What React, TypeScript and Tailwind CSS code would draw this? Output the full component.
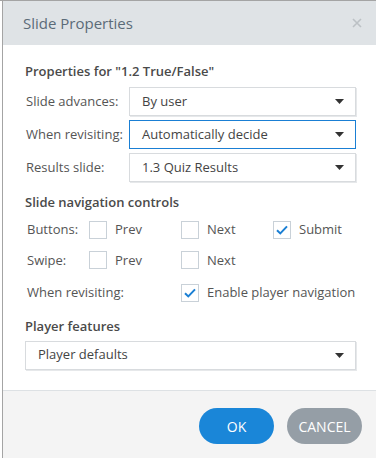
import React from "react"

const font = { fontFamily: '"Segoe UI", "Open Sans", sans-serif' }

function Caret() {
  return (
    <svg width="9" height="5" viewBox="0 0 9 5" className="shrink-0">
      <path d="M0 0h9L4.5 5z" fill="#333" />
    </svg>
  )
}

interface SelectProps {
  value: string
  active?: boolean
  className?: string
}

function Select({ value, active, className }: SelectProps) {
  return (
    <div
      className={`flex items-center h-[29px] pl-[12px] pr-[11px] bg-white border text-[13px] text-[#444] whitespace-nowrap ${
        active
          ? "border-[#1a7fd4]"
          : "border-[#d8dbde] shadow-[1px_1px_0_#e6e8ea]"
      } ${className ?? ""}`}
    >
      <span className="flex-1">{value}</span>
      <Caret />
    </div>
  )
}

function Check({ checked, label, wide }: { checked?: boolean; label: string; wide?: boolean }) {
  return (
    <div className={`flex items-center shrink-0 ${wide ? "" : "w-[92px]"}`}>
      <div className="w-[18px] h-[18px] shrink-0 border border-[#c9d1d8] bg-white flex items-center justify-center">
        {checked && (
          <svg width="12" height="10" viewBox="0 0 12 10">
            <path d="M1 5.2l3.3 3.2L11 1.4" fill="none" stroke="#1a7fd4" strokeWidth="2" />
          </svg>
        )}
      </div>
      <span className="ml-[8px] text-[13px] text-[#555] whitespace-nowrap">{label}</span>
    </div>
  )
}

export default function App() {
  return (
    <div className="w-[376px] h-[458px] bg-white border-t border-[#a4a4a4] overflow-hidden" style={font}>
      <div className="ml-[2px] h-full border-l border-[#a4a4a4] flex flex-col">
        <header className="h-[44px] shrink-0 bg-[#dfe3e6] flex items-center pl-[20px] pr-[14px]">
          <span className="flex-1 text-[15px] text-[#5b6b78]">Slide Properties</span>
          <svg width="10" height="10" viewBox="0 0 10 10">
            <path d="M1 1l8 8M9 1l-8 8" stroke="#bcc1c5" strokeWidth="1.6" />
          </svg>
        </header>

        <div className="flex-1 bg-white pl-[22px] pr-[20px] pt-[16px]">
          <h2 className="text-[13px] font-semibold text-[#4a4a4a] leading-[20px]">
            Properties for "1.2 True/False"
          </h2>
          <div className="mt-[6px] flex flex-col gap-[4px]">
            {[
              ["Slide advances:", "By user", false],
              ["When revisiting:", "Automatically decide", true],
              ["Results slide:", "1.3 Quiz Results", false],
            ].map(([label, value, active]) => (
              <div key={label as string} className="flex items-center">
                <span className="w-[104px] shrink-0 pl-[1px] text-[13px] text-[#555] whitespace-nowrap">{label}</span>
                <Select value={value as string} active={active as boolean} className="flex-1" />
              </div>
            ))}
          </div>

          <h2 className="mt-[10px] text-[13px] font-semibold text-[#4a4a4a] leading-[20px]">
            Slide navigation controls
          </h2>
          <div className="mt-[8px] flex items-center">
            <span className="w-[64px] shrink-0 pl-[2px] text-[13px] text-[#555]">Buttons:</span>
            <Check label="Prev" />
            <Check label="Next" />
            <Check label="Submit" checked wide />
          </div>
          <div className="mt-[11px] flex items-center">
            <span className="w-[64px] shrink-0 pl-[2px] text-[13px] text-[#555]">Swipe:</span>
            <Check label="Prev" />
            <Check label="Next" />
          </div>
          <div className="mt-[13px] flex items-center">
            <span className="w-[156px] shrink-0 pl-[2px] text-[13px] text-[#555]">When revisiting:</span>
            <Check label="Enable player navigation" checked wide />
          </div>

          <h2 className="mt-[13px] text-[13px] font-semibold text-[#4a4a4a] leading-[20px]">
            Player features
          </h2>
          <Select value="Player defaults" className="mt-[5px]" />
        </div>

        <footer className="h-[68px] shrink-0 bg-[#f4f4f4] border-t border-[#dde1e4] flex items-start justify-end gap-[13px] pr-[14px] pt-[17px]">
          <button className="w-[75px] h-[36px] rounded-full bg-[#1a86d8] text-white text-[14px]">OK</button>
          <button className="w-[75px] h-[36px] rounded-full bg-[#959ea6] text-white text-[14px]">CANCEL</button>
        </footer>
      </div>
    </div>
  )
}
